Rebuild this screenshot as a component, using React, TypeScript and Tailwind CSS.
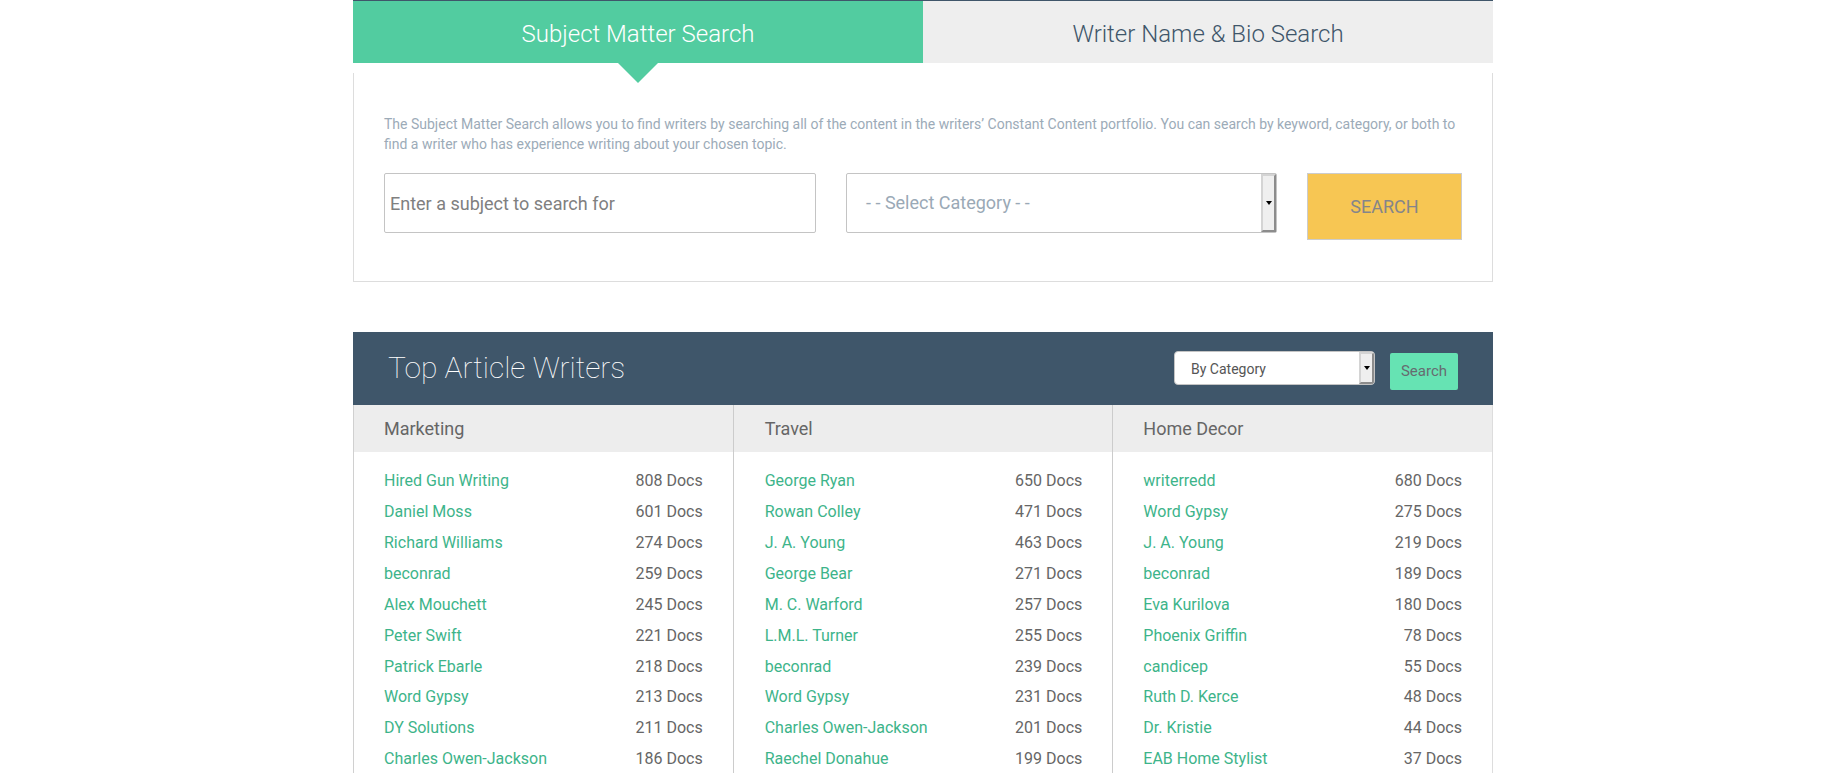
import React from "react";

const columns = [
  {
    title: "Marketing",
    writers: [
      ["Hired Gun Writing", 808],
      ["Daniel Moss", 601],
      ["Richard Williams", 274],
      ["beconrad", 259],
      ["Alex Mouchett", 245],
      ["Peter Swift", 221],
      ["Patrick Ebarle", 218],
      ["Word Gypsy", 213],
      ["DY Solutions", 211],
      ["Charles Owen-Jackson", 186],
    ],
  },
  {
    title: "Travel",
    writers: [
      ["George Ryan", 650],
      ["Rowan Colley", 471],
      ["J. A. Young", 463],
      ["George Bear", 271],
      ["M. C. Warford", 257],
      ["L.M.L. Turner", 255],
      ["beconrad", 239],
      ["Word Gypsy", 231],
      ["Charles Owen-Jackson", 201],
      ["Raechel Donahue", 199],
    ],
  },
  {
    title: "Home Decor",
    writers: [
      ["writerredd", 680],
      ["Word Gypsy", 275],
      ["J. A. Young", 219],
      ["beconrad", 189],
      ["Eva Kurilova", 180],
      ["Phoenix Griffin", 78],
      ["candicep", 55],
      ["Ruth D. Kerce", 48],
      ["Dr. Kristie", 44],
      ["EAB Home Stylist", 37],
    ],
  },
];

// native select spinner look
function SelectArrow() {
  return (
    <div className="flex w-[15px] shrink-0 items-center justify-center bg-[#efefef] border-l-[2px] border-l-[#d4d4d4] border-r-[2px] border-r-[#8c8c8c] border-b-[2px] border-b-[#8c8c8c] border-t-[2px] border-t-[#d4d4d4]">
      <div className="w-0 h-0 border-x-[3px] border-x-transparent border-t-[4px] border-t-black" />
    </div>
  );
}

export default function App() {
  return (
    <div className="h-[773px] overflow-hidden bg-white font-['Roboto',sans-serif]">
      <div className="w-[1140px] ml-[353px]">
        {/* Tabs */}
        <div className="flex h-[63px] border-t border-t-[#3f566a]">
          <div className="relative w-[570px] pt-[3px] bg-[#52cca0] flex items-center justify-center text-white text-2xl font-light">
            Subject Matter Search
            <div className="absolute top-full left-1/2 -translate-x-1/2 w-0 h-0 border-x-[20px] border-x-transparent border-t-[20px] border-t-[#52cca0]" />
          </div>
          <div className="w-[570px] pt-[3px] bg-[#eeeeee] flex items-center justify-center text-[#3f566a] text-2xl font-light">
            Writer Name &amp; Bio Search
          </div>
        </div>

        {/* Search panel */}
        <div className="mt-[10px] h-[209px] border-x border-b border-[#dddddd] px-[30px] pt-[41px]">
          <p className="text-sm leading-5 font-normal text-[#9cabb8]">
            The Subject Matter Search allows you to find writers by searching all of the content in the writers&#8217; Constant Content portfolio. You can search by keyword, category, or both to find a writer who has experience writing about your chosen topic.
          </p>
          <div className="flex items-start mt-[19px]">
            <input
              placeholder="Enter a subject to search for"
              className="w-[432px] h-[60px] border border-[#c4c4c4] rounded-[2px] px-[5px] text-lg text-[#808080] placeholder:text-[#808080] font-['Roboto',sans-serif]"
            />
            <div className="ml-[30px] w-[431px] h-[60px] flex border border-[#c4c4c4] rounded-[2px]">
              <span className="flex-1 pl-[19px] flex items-center text-lg text-[#9aa9b6]">- - Select Category - -</span>
              <SelectArrow />
            </div>
            <button className="ml-[30px] w-[155px] h-[67px] bg-[#f7c653] border border-[#cccccc] text-lg text-[#85858a]">
              SEARCH
            </button>
          </div>
        </div>

        {/* Top writers */}
        <div className="mt-[50px] h-[73px] bg-[#3f566a] flex items-center pl-[35px] pr-[35px]">
          <h2 className="text-[30px] font-thin text-white mb-[2px]">Top Article Writers</h2>
          <div className="ml-auto w-[201px] h-[34px] mb-[1px] flex bg-white border border-[#c4c4c4] rounded-[4px] overflow-hidden">
            <span className="flex-1 pl-[16px] pt-px flex items-center text-sm text-[#555555]">By Category</span>
            <SelectArrow />
          </div>
          <button className="ml-[15px] w-[68px] h-[37px] mt-[6px] rounded-[2px] bg-[#66e3b3] text-[15px] text-[#666b70]">
            Search
          </button>
        </div>

        <div className="grid grid-cols-3 border-l border-[#d0d0d0]">
          {columns.map((col, i) => (
            <div key={col.title} className={i < 2 ? "border-r border-[#cccccc]" : "border-r border-[#dddddd]"}>
              <div className={`h-[47px] pt-px bg-[#ededed] flex items-center text-lg text-[#666666] ${i === 1 ? "pl-[31px]" : "pl-[30px]"}`}>{col.title}</div>
              <ul className={`pr-[30px] pt-[14px] ${i === 1 ? "pl-[31px]" : "pl-[30px]"}`}>
                {col.writers.map(([name, docs]) => (
                  <li key={name as string} className="flex justify-between h-[30.86px] items-center text-base">
                    <span className="text-[#3db48a]">{name}</span>
                    <span className="text-[#666666]">{docs} Docs</span>
                  </li>
                ))}
              </ul>
            </div>
          ))}
        </div>
      </div>
    </div>
  );
}
